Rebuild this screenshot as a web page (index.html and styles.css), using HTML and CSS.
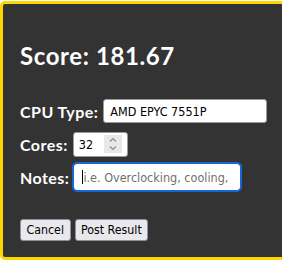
FILE: index.html
```html
<!DOCTYPE html>
<html lang="en">
<head>
<meta charset="utf-8">
<title>Post Result</title>
<link rel="stylesheet" href="styles.css">
</head>
<body>
<div class="dialog">
  <h2 class="score">Score: 181.67</h2>
  <form class="form">
    <div class="row">
      <label class="lbl" for="cpu">CPU Type:</label>
      <input id="cpu" class="field field-cpu" type="text" value="AMD EPYC 7551P">
    </div>
    <div class="row">
      <label class="lbl" for="cores">Cores:</label>
      <span class="num">
        <input id="cores" class="num-input" type="text" value="32">
        <span class="spin">
          <svg width="18" height="18" viewBox="0 0 18 18" aria-hidden="true">
            <path d="M6 6.5 L9 3.5 L12 6.5" fill="none" stroke="#8c8c8c" stroke-width="1.2"/>
            <path d="M6 11.5 L9 14.5 L12 11.5" fill="none" stroke="#8c8c8c" stroke-width="1.2"/>
          </svg>
        </span>
      </span>
    </div>
    <div class="row">
      <label class="lbl" for="notes">Notes:</label>
      <span class="focus-wrap">
        <input id="notes" class="field field-notes" type="text" placeholder="i.e. Overclocking, cooling,">
        <span class="caret"></span>
      </span>
    </div>
    <div class="actions">
      <button type="button" class="btn">Cancel</button>
      <button type="submit" class="btn">Post Result</button>
    </div>
  </form>
</div>
</body>
</html>
```

FILE: styles.css
```css
html, body {
  margin: 0;
  padding: 0;
}
body {
  padding-top: 1px;
  background: #ffffff;
  overflow: hidden;
}
.dialog {
  width: 330px;
  box-sizing: border-box;
  border: 3px solid #ffd500;
  border-radius: 5px;
  background: #333333;
  padding: 38px 17px 16px;
}
.score {
  margin: 0 0 29px;
  font-family: Lato, "Open Sans", sans-serif;
  font-weight: 700;
  font-size: 24px;
  line-height: 28px;
  letter-spacing: 0.6px;
  color: #ffffff;
}
.form {
  margin: 0;
}
.row {
  display: flex;
  align-items: center;
  gap: 5px;
  height: 24px;
  margin-bottom: 9px;
}
.lbl {
  font-family: Lato, "Open Sans", sans-serif;
  font-weight: 700;
  font-size: 16px;
  line-height: 19px;
  letter-spacing: 0.45px;
  color: #ffffff;
}
.field {
  box-sizing: border-box;
  height: 24px;
  margin: 0;
  border: 1px solid #9a9a9a;
  border-radius: 3px;
  padding: 0 6px;
  background: #ffffff;
  color: #000000;
  font-family: "DejaVu Sans Condensed", "DejaVu Sans", sans-serif;
  font-stretch: condensed;
  font-size: 12.5px;
  outline: none;
}
.field-cpu {
  width: 164px;
}
.focus-wrap {
  position: relative;
  display: inline-flex;
}
.field-notes {
  width: 166px;
  height: 26px;
  padding-left: 8px;
  border-color: #ffffff;
  box-shadow: 0 0 0 2px #1666d8;
}
.field-notes::placeholder {
  color: #707070;
  opacity: 1;
}
.caret {
  position: absolute;
  left: 8px;
  top: 6px;
  width: 1px;
  height: 14px;
  background: #000000;
}
.num {
  box-sizing: border-box;
  display: inline-flex;
  align-items: center;
  width: 55px;
  height: 25px;
  border: 1px solid #9a9a9a;
  border-radius: 3px;
  background: #ffffff;
  padding: 0 5px 0 5px;
}
.num-input {
  width: 25px;
  border: 0;
  padding: 0;
  margin: 0;
  background: transparent;
  color: #000000;
  font-family: "DejaVu Sans Condensed", "DejaVu Sans", sans-serif;
  font-stretch: condensed;
  font-size: 12.5px;
  outline: none;
}
.spin {
  display: block;
  width: 18px;
  height: 18px;
  background: #e8e8ec;
}
.spin svg {
  display: block;
}
.actions {
  display: flex;
  gap: 4px;
  margin-top: 30px;
}
.btn {
  box-sizing: border-box;
  height: 22px;
  margin: 0;
  padding: 0 5.5px;
  border: 1px solid #8f8f9d;
  border-radius: 3px;
  background: #e9e9ed;
  color: #000000;
  font-family: "DejaVu Sans Condensed", "DejaVu Sans", sans-serif;
  font-stretch: condensed;
  font-size: 12.3px;
}
```
